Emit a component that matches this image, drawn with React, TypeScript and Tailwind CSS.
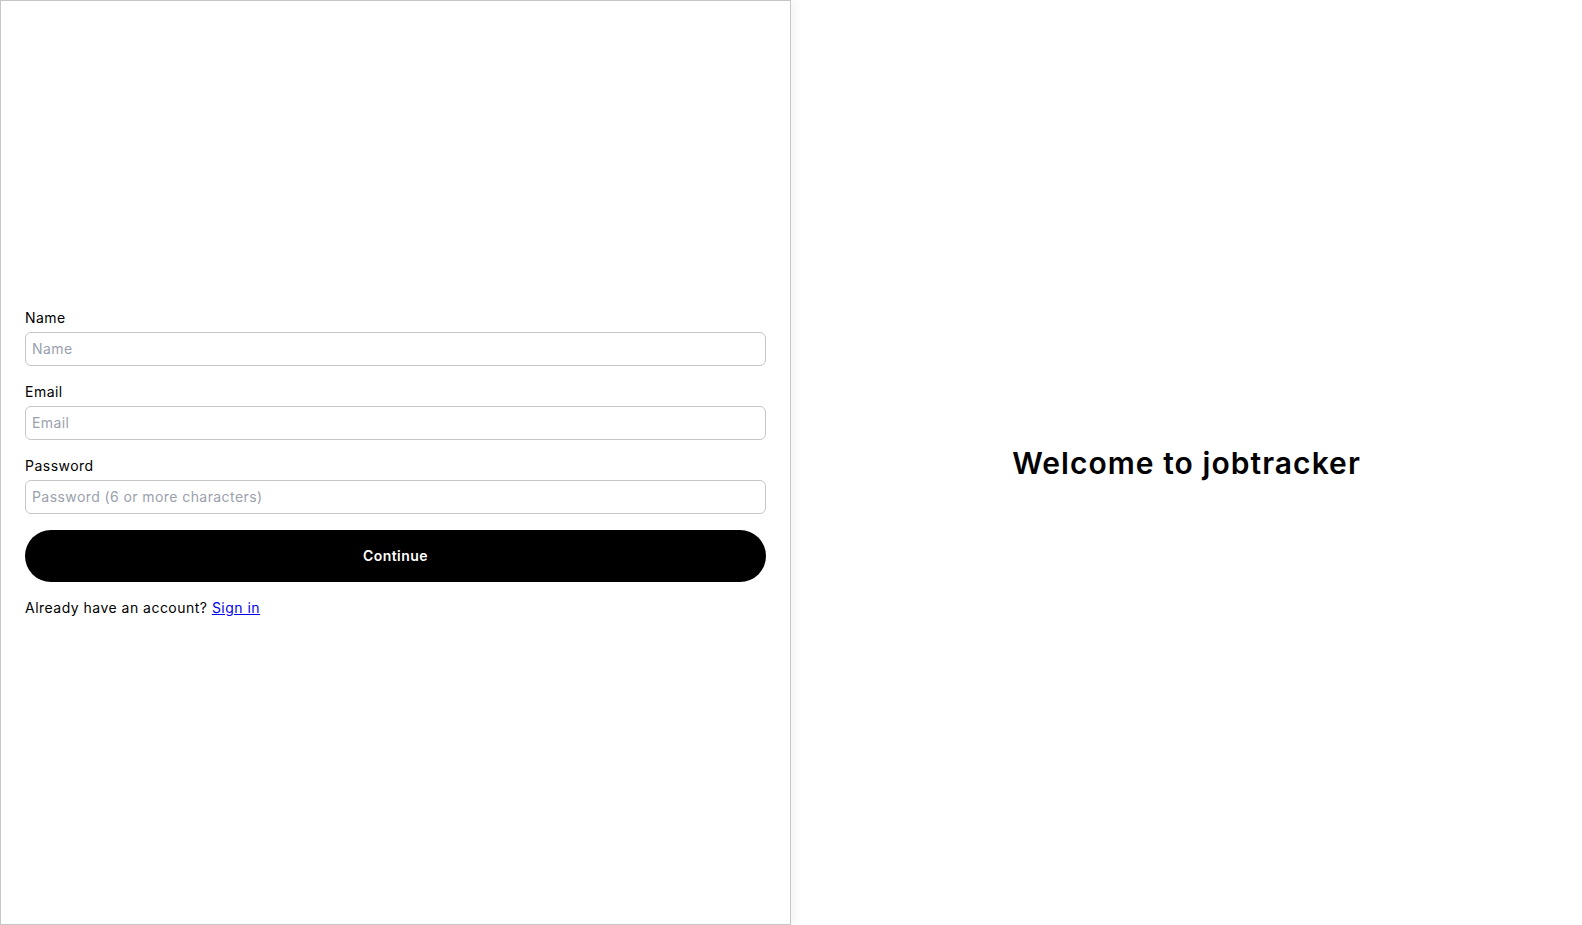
function Field({ label, placeholder, type }: { label: string; placeholder: string; type: string }) {
  return (
    <div className="flex flex-col">
      <label className="text-sm leading-5 text-black mb-1">{label}</label>
      <input
        type={type}
        placeholder={placeholder}
        className="h-[34px] w-full rounded-md border border-[#c6c6c6] px-[6px] text-sm tracking-[0.03em] text-black placeholder:text-[#9aa1ad] outline-none"
      />
    </div>
  );
}

export default function App() {
  return (
    <div className="flex h-screen w-full bg-white font-['Inter',sans-serif] tracking-[0.03em]">
      <div className="z-10 flex h-full w-1/2 flex-col justify-center border border-[#c6c6c6] bg-white px-6 shadow-[4px_0_10px_rgba(0,0,0,0.05)]">
        <form className="flex flex-col gap-4">
          <Field label="Name" placeholder="Name" type="text" />
          <Field label="Email" placeholder="Email" type="email" />
          <Field label="Password" placeholder="Password (6 or more characters)" type="password" />
          <button
            type="button"
            className="h-[52px] w-full rounded-full bg-black text-sm font-semibold tracking-[0.03em] text-white"
          >
            Continue
          </button>
          <p className="text-sm leading-5 text-black">
            Already have an account?{" "}
            <a href="#" className="text-[#0000ee] underline">
              Sign in
            </a>
          </p>
        </form>
      </div>
      <div className="flex h-full w-1/2 items-center justify-center">
        <h1 className="text-3xl font-semibold tracking-[0.035em] text-black">Welcome to jobtracker</h1>
      </div>
    </div>
  );
}
